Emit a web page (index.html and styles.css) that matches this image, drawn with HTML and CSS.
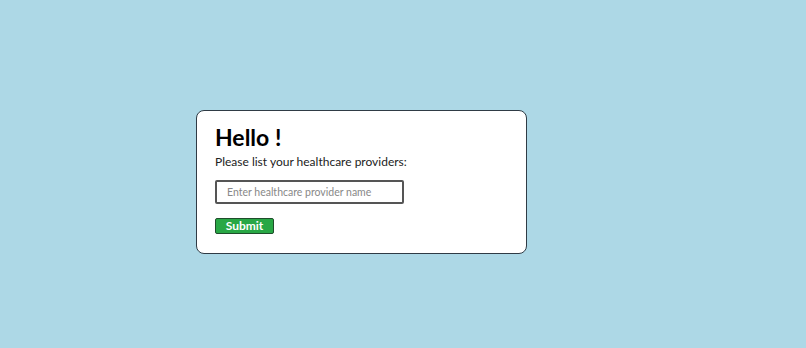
FILE: index.html
```html
<!DOCTYPE html>
<html lang="en">
<head>
    <meta charset="UTF-8">
    <meta name="viewport" content="width=device-width, initial-scale=1.0">
    <title>Healthcare Providers</title>
    <link rel="stylesheet" href="styles.css">
</head>
<body>
    <div class="page">
        <div class="card">
            <h1 class="title">Hello !</h1>
            <p class="prompt">Please list your healthcare providers:</p>
            <input class="provider-input" type="text" placeholder="Enter healthcare provider name">
            <button class="submit-button">Submit</button>
        </div>
    </div>
</body>
</html>
```

FILE: styles.css
```css
body {
    font-family: 'Lato', 'Open Sans', sans-serif;
    margin: 0;
    background-color: #add8e6;
    min-height: 100vh;
}
.page {
    padding: 110px 0 0 196px;
}
.card {
    box-sizing: border-box;
    width: 331px;
    height: 144px;
    background-color: white;
    border: 1px solid #2f3b45;
    border-radius: 8px;
    padding: 11px 18px;
}
.title {
    font-size: 23px;
    font-weight: 700;
    margin: 0;
    color: #000;
    line-height: 30px;
}
.prompt {
    font-size: 12px;
    margin: 0 0 8px 0;
    color: #222;
    line-height: 20px;
}
.provider-input {
    display: block;
    box-sizing: border-box;
    width: 189px;
    height: 24px;
    border: 2px solid #555;
    border-radius: 2px;
    padding: 0 10px;
    font-family: inherit;
    font-size: 10.5px;
    margin-bottom: 14px;
}
.provider-input::placeholder {
    color: #888;
}
.submit-button {
    display: block;
    box-sizing: border-box;
    width: 59px;
    height: 16px;
    padding: 0;
    background-color: #28a745;
    color: white;
    border: 1px solid #1f4d2b;
    border-radius: 2px;
    font-family: inherit;
    font-size: 12px;
    font-weight: 700;
    line-height: 14px;
}
```
